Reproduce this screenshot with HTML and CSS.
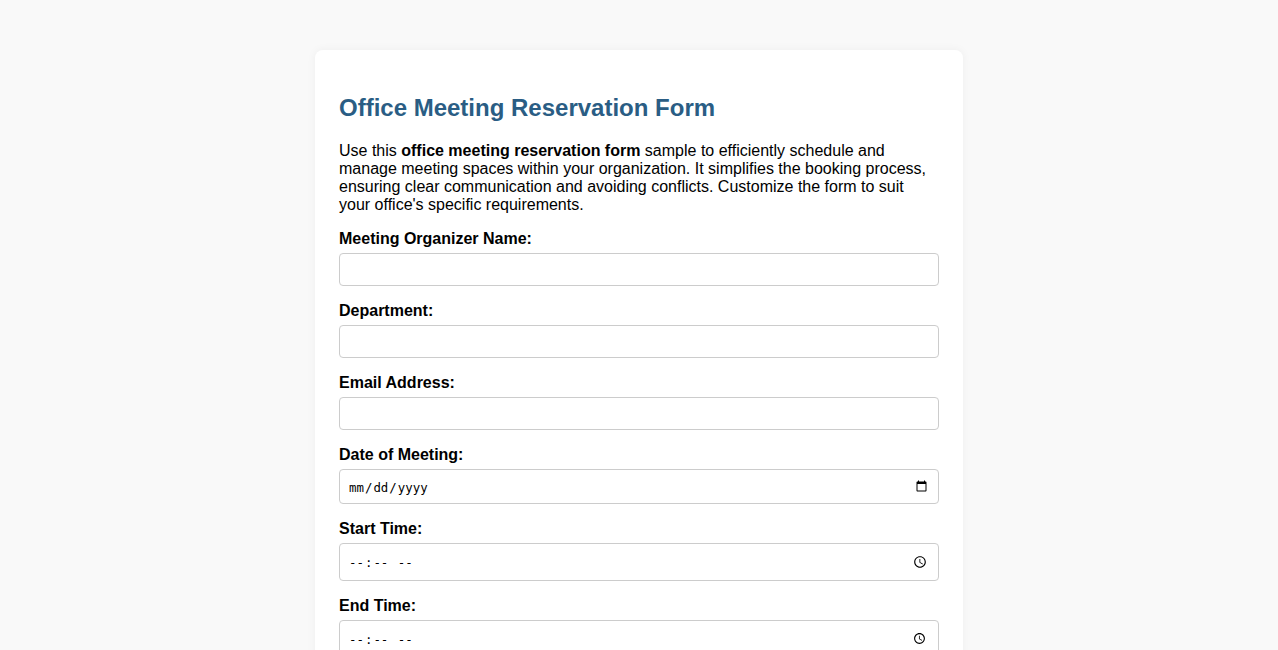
FILE: index.html
```html
<!DOCTYPE html>
<html lang="en">
<head>
    <meta charset="UTF-8">
    <title>Office Meeting Reservation Form</title>
    <link rel="stylesheet" href="styles.css">
</head>
<body>

<div class="form-container">
    <h2>Office Meeting Reservation Form</h2>
    <p>Use this <strong>office meeting reservation form</strong> sample to efficiently schedule and manage meeting spaces within your organization. It simplifies the booking process, ensuring clear communication and avoiding conflicts. Customize the form to suit your office's specific requirements.</p>
    <form>
        <label for="organizer">Meeting Organizer Name:</label>
        <input type="text" id="organizer" name="organizer">
        <label for="department">Department:</label>
        <input type="text" id="department" name="department">
        <label for="email">Email Address:</label>
        <input type="email" id="email" name="email">
        <label for="date">Date of Meeting:</label>
        <input type="date" id="date" name="date">
        <label for="start">Start Time:</label>
        <input type="time" id="start" name="start">
        <label for="end">End Time:</label>
        <input type="time" id="end" name="end">
    </form>
</div>

</body>
</html>
```

FILE: styles.css
```css
body {
    font-family: "Liberation Sans", Arial, sans-serif;
    background-color: #f9f9f9;
    margin: 0;
    padding: 50px 0 0;
}
.form-container {
    box-sizing: border-box;
    width: 648px;
    margin: 0 auto;
    padding: 24px;
    background-color: #fff;
    border-radius: 8px;
    box-shadow: 0 0 10px rgba(0,0,0,0.05);
}
h2 {
    color: #2a5d84;
    font-size: 24px;
    margin: 20px 0;
}
p {
    font-size: 16px;
    line-height: 18px;
    margin: 0 0 16px;
}
label {
    display: block;
    font-weight: bold;
    font-size: 16px;
    margin-bottom: 5px;
}
input {
    display: block;
    box-sizing: border-box;
    width: 100%;
    padding: 8px;
    margin-bottom: 16px;
    border: 1px solid #ccc;
    border-radius: 4px;
    font-size: 13px;
}
input::-webkit-datetime-edit {
    font-size: 12.4px;
    transform: translateY(1px);
}
```
